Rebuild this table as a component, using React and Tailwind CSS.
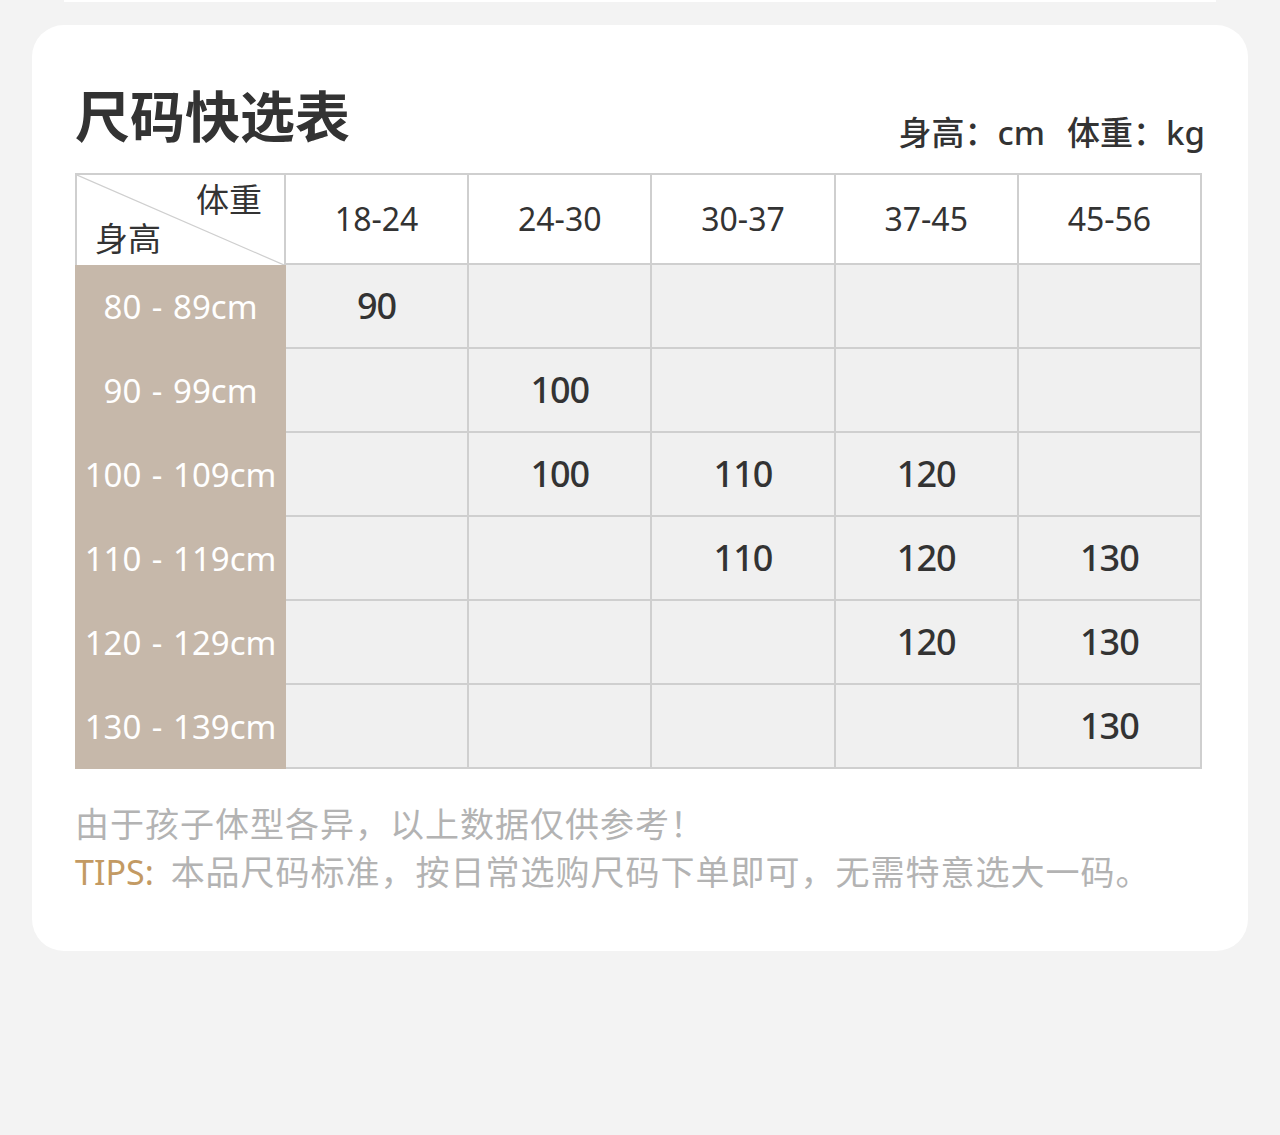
import React from "react";

const font = { fontFamily: '"Noto Sans", "Noto Sans CJK SC", sans-serif' };

const weights = ["18-24", "24-30", "30-37", "37-45", "45-56"];

const rows = [
  { label: "80 - 89cm", sizes: ["90", "", "", "", ""] },
  { label: "90 - 99cm", sizes: ["", "100", "", "", ""] },
  { label: "100 - 109cm", sizes: ["", "100", "110", "120", ""] },
  { label: "110 - 119cm", sizes: ["", "", "110", "120", "130"] },
  { label: "120 - 129cm", sizes: ["", "", "", "120", "130"] },
  { label: "130 - 139cm", sizes: ["", "", "", "", "130"] },
];

const SizeTable = () => (
  <div className="grid w-[1127px] grid-cols-[211px_repeat(5,1fr)]">
    {/* corner cell */}
    <div className="relative h-[92px] border-t-2 border-l-2 border-r-2 border-[#cfcfcf] bg-white">
      <svg className="absolute inset-0 h-full w-full" preserveAspectRatio="none" viewBox="0 0 100 100">
        <line x1="0" y1="0" x2="100" y2="100" stroke="#cfcfcf" strokeWidth="1.2" vectorEffect="non-scaling-stroke" />
      </svg>
      <span className="absolute right-[22px] top-[5px] text-[33px] leading-[40px] text-[#333]">体重</span>
      <span className="absolute left-[18px] top-[44px] text-[33px] leading-[40px] text-[#333]">身高</span>
    </div>
    {weights.map((w) => (
      <div
        key={w}
        className="flex h-[92px] items-center justify-center border-t-2 border-r-2 border-b-2 border-[#cfcfcf] bg-white text-[32px] text-[#333]"
      >
        {w}
      </div>
    ))}

    {rows.map((r) => (
      <React.Fragment key={r.label}>
        <div className="flex h-[84px] items-center justify-center bg-[#c6b8aa] text-[33px] text-white [word-spacing:2px]">
          {r.label}
        </div>
        {r.sizes.map((s, i) => (
          <div
            key={i}
            className="flex h-[84px] items-center justify-center border-r-2 border-b-2 border-[#cfcfcf] bg-[#f0f0f0] text-[36px] font-medium tracking-[-1px] text-[#333]"
          >
            {s}
          </div>
        ))}
      </React.Fragment>
    ))}
  </div>
);

export default function App() {
  return (
    <div className="min-h-[1135px] bg-[#f3f3f3]" style={font}>
      <div className="mx-[64px] h-[2px] bg-white" />
      <div className="mx-[32px] mt-[23px] w-[1216px] rounded-[32px] bg-white px-[43px] pt-[59px] pb-[55px]">
        <div className="flex items-end justify-between">
          <h1 className="text-[55px] font-semibold leading-[64px] text-[#333]">尺码快选表</h1>
          <div className="text-[33px] font-medium leading-[30px] text-[#333]">
            身高：cm<span className="ml-[22px]">体重：kg</span>
          </div>
        </div>
        <div className="mt-[25px]">
          <SizeTable />
        </div>
        <div className="mt-[31px] text-[34px] leading-[48px] tracking-[1px] text-[#b3b3b3]">
          <p>由于孩子体型各异，以上数据仅供参考！</p>
          <p>
            <span className="pr-[8px] tracking-normal text-[#c39a63]">TIPS: </span>
            本品尺码标准，按日常选购尺码下单即可，无需特意选大一码。
          </p>
        </div>
      </div>
    </div>
  );
}
